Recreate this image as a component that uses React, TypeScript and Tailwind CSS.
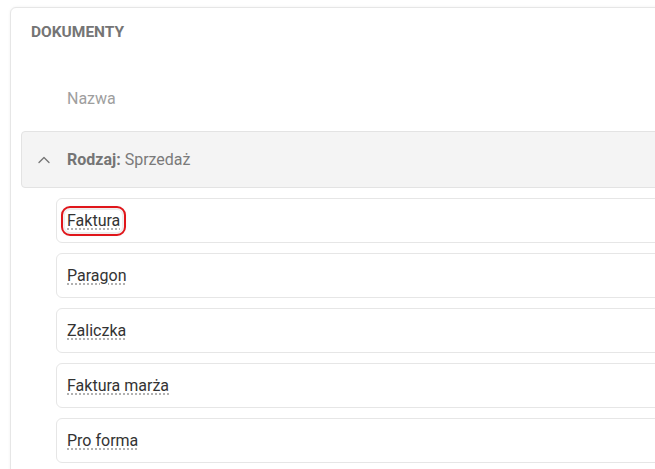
import { ChevronUp } from "lucide-react";

const items = ["Faktura", "Paragon", "Zaliczka", "Faktura marża", "Pro forma"];

export default function App() {
	return (
		<div className="h-[469px] w-[655px] overflow-hidden bg-white font-['Roboto',sans-serif]">
			<div className="ml-[10px] mt-[7px] w-[700px] h-[520px] rounded-md border border-[#e6e6e6] bg-white shadow-[0_0_3px_rgba(0,0,0,0.06)]">
				<div className="px-[10px] pt-[14px]">
					<h2 className="pl-[10px] text-[15.5px] leading-5 font-bold text-[#757575]">DOKUMENTY</h2>

					{/* column header */}
					<div className="flex h-[24px] items-center pl-[46px] mt-[45px] text-[16px] text-[#9e9e9e]">
						Nazwa
					</div>

					{/* group row */}
					<div className="mt-[20px] flex h-[57px] items-center rounded-[4px] border border-[#e3e3e3] bg-[#f4f4f4]">
						<ChevronUp size={20} strokeWidth={1.6} className="ml-[12px] text-[#757575]" />
						<span className="ml-[13px] text-[16px] text-[#7a7a7a]">
							<span className="font-bold text-[#757575]">Rodzaj:</span> Sprzedaż
						</span>
					</div>

					{/* items */}
					<div className="mt-[10px] ml-[35px] flex flex-col gap-[10px]">
						{items.map((name, i) => (
							<div key={name} className="flex h-[45px] items-center rounded-[6px] border border-[#e6e6e6] bg-white pl-[10px]">
								<span
									className={
										i === 0
											? "mt-px -mx-[2px] px-[2px] text-[16px] leading-[22px] text-[#333] underline decoration-dotted decoration-[#9e9e9e] underline-offset-[3px] rounded-[5px] outline-2 outline-[#e0161b] outline-offset-[2px] shadow-[0_0_4px_2px_rgba(0,0,0,0.1)]"
											: "mt-px text-[16px] leading-[22px] text-[#333] underline decoration-dotted decoration-[#9e9e9e] underline-offset-[3px]"
									}
								>
									{name}
								</span>
							</div>
						))}
					</div>
				</div>
			</div>
		</div>
	);
}
